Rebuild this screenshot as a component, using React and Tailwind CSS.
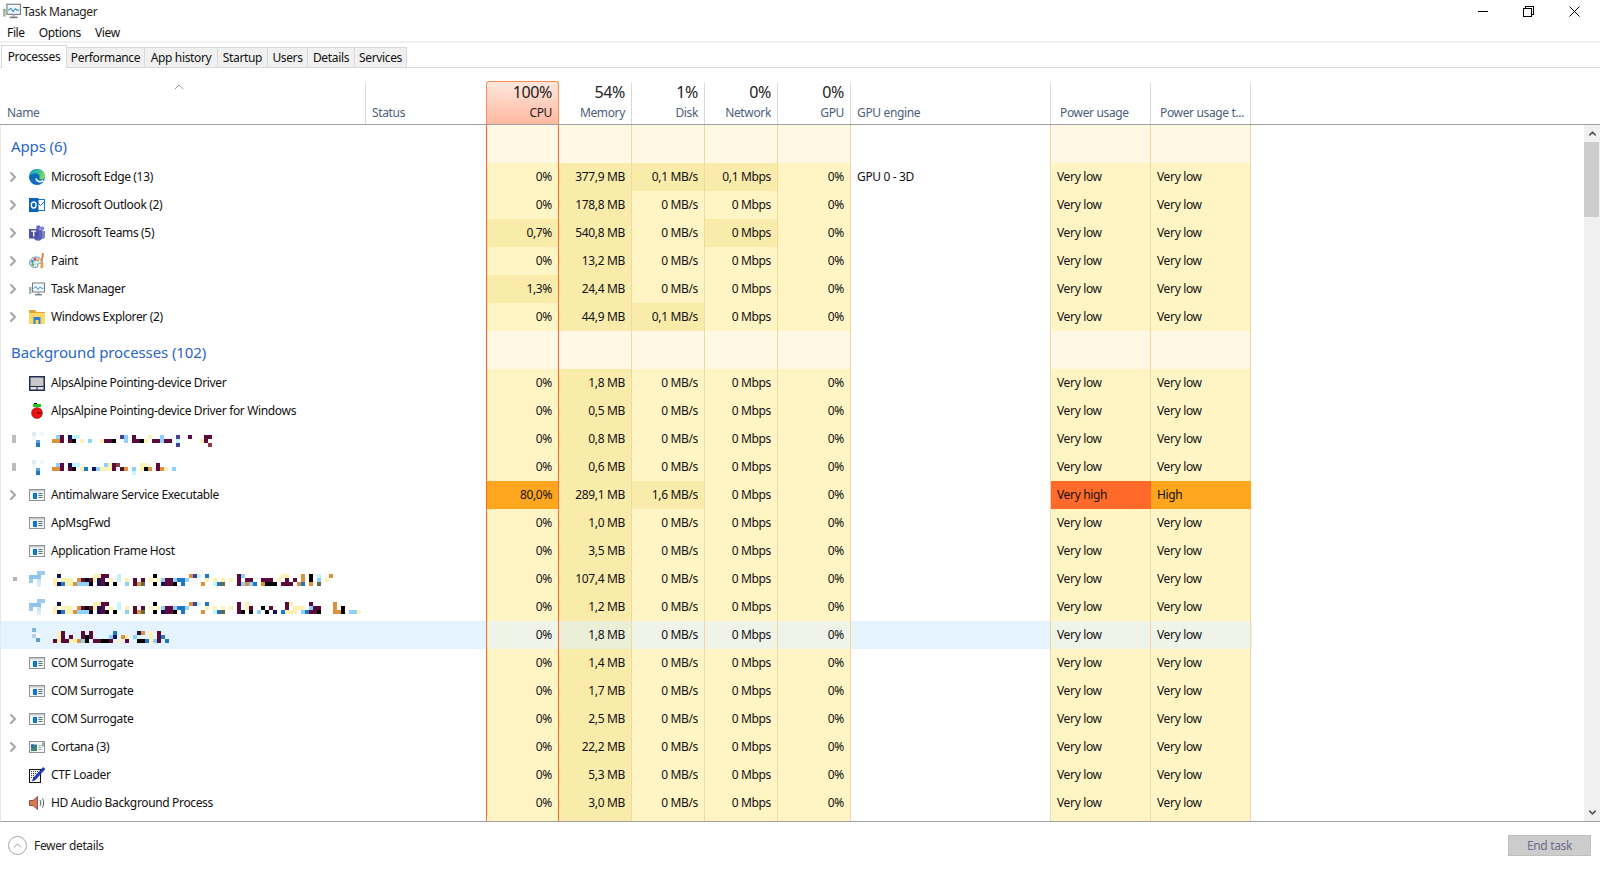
import { ChevronRight, ChevronUp, ChevronDown } from 'lucide-react'

const palette = {
  b: '#8fd0ff', B: '#1f78c4', p: '#5c0a3c', n: '#14145c', c: '#c4f4ff', i: '#44409a', y: '#fbf2b4',
  o: '#dc9238', k: '#000000', r: '#8a3c40', g: '#6a6a40',
}

// pixelated (redacted) names: each row is a list of "<cell index><colour>" in 4px cells
function Mosaic({ rows, x = 0, y = 0 }) {
  const parsed = rows.map((r) => r.split(' ').filter(Boolean).map((c) => [parseInt(c, 10), c.slice(-1)]))
  const width = (Math.max(...parsed.flat().map((c) => c[0])) + 1) * 4
  return (
    <svg width={width} height={rows.length * 4} shapeRendering="crispEdges" className="shrink-0" style={{ marginLeft: x, marginTop: y }}>
      {parsed.map((row, j) =>
        row.map(([i, ch]) => <rect key={`${i}-${j}`} x={i * 4} y={j * 4} width="4" height="4" fill={palette[ch]} />)
      )}
    </svg>
  )
}

const c1 = '1n 10y 11y 12p 13p 16c 25k 34o 35i 36c 38B '
const c2 = '0y 2y 3y 4y 6o 7p 8k 9p 10y 11n 12p 14y 16c 18y 20p 22p 24y 26y 27b 28p 29p 30b 31B 32B 33b 38y 40y 42y 44y '
const c3 = '0y 1n 2B 3y 4y 5o 6b 7b 8b 9k 11n 12p 13k 15k 18b 20p 21o 22g 25k 27n 28p 29p 30k 32B 37o 40c 41B 42g '

const blurA = [
  '1b 2p 4n 5c 6c 17i 18b 20p 24y 27b 31i 34p 38p 39p',
  '0o 1o 2p 4p 5k 7y 9b 12y 13p 14p 15k 18b 20p 21p 22k 23y 25p 26p 27b 28p 29p 31c 37y 38p',
  '31i 39r',
]
const blurB = [
  '1b 2p 4n 5c 6c 13b 14y 15p 16r 22y 23y 26p',
  '0o 1o 2p 4p 5k 7y 8B 10n 11b 12y 13y 14y 15p 17p 18o 20b 22y 23k 24o 26p 27o 28y 30b',
  '20c',
]
const blurC = [
  c1 + '46p 47b 57y 58y 62o 64k 66c 69o',
  c2 + '46p 48p 49p 52p 53p 54p 56y 58p 60p 62o 64k 66b 68y',
  c3 + '46p 47b 48o 49b 50B 52o 53k 54k 55k 57p 58p 59p 61o 62B 64o 66g',
]
const blurD = [
  c1 + '46p 48y 58p 59y 64p 70o',
  c2 + '46p 48y 49p 52k 54p 58p 60y 61y 62y 64b 65p 66p 70o 72k',
  c3 + '46p 47k 49k 51b 53k 55n 57B 58y 59y 60y 62b 63B 64p 65p 66k 70o 71o 72k 74b 75b 76y',
]
const blurE = [
  '1y 2p 7p 9p 15B 21n 22o 24y 26p',
  '1y 2p 4p 7p 8k 9p 14b 15n 17o 18y 20b 24y 26p 27B',
  '0p 1y 2p 3p 4y 5y 6o 7b 8k 10p 11p 12k 13k 14p 16y 18p 21k 22k 23B 24y 25b 26p 28B',
]

const Box = ({ children }) => (
  <svg width="16" height="16" viewBox="0 0 16 16" className="shrink-0">{children}</svg>
)

const EdgeIcon = () => (
  <Box>
    <defs>
      <linearGradient id="edgeTop" x1="0" y1="0" x2="1" y2="0.3">
        <stop offset="0" stopColor="#1a9ed0" />
        <stop offset="0.6" stopColor="#35c1a0" />
        <stop offset="1" stopColor="#7cdc5c" />
      </linearGradient>
    </defs>
    <circle cx="8" cy="8" r="8" fill="#0d6cbe" />
    <path d="M.4 6.500C1.500 2.500 4.500 0 8.500 0 13 0 16 3.500 16 7.500c0 2-1.500 3-3 3-2 0-3-1-2.500-2 .6-1.500-.5-4-3-4-3 0-5 .4-7.100 2z" fill="url(#edgeTop)" />
    <path d="M7 9.500c.5 3 4 4 7.500 2" fill="none" stroke="#eaf5fc" strokeWidth="1.700" />
  </Box>
)
const OutlookIcon = () => (
  <Box>
    <rect x="5" y="2.500" width="10.500" height="11" fill="#ffffff" stroke="#0f78d4" />
    <path d="M8 5l3.500 3.500L15 5" fill="none" stroke="#0f78d4" />
    <rect x="0" y="1" width="9.500" height="14" fill="#0c64b8" />
    <ellipse cx="4.700" cy="8" rx="2.400" ry="3" fill="none" stroke="#fff" strokeWidth="1.400" />
  </Box>
)
const TeamsIcon = () => (
  <Box>
    <circle cx="13.200" cy="3.400" r="2" fill="#7b83cc" />
    <circle cx="9.400" cy="2.600" r="2.300" fill="#6a70c0" />
    <path d="M11 6h5v5.500c0 1.500-1.200 2.500-2.500 2.500H11z" fill="#7b83cc" />
    <path d="M5 5h8v7.500c0 2-1.500 3.300-4 3.300-2.200 0-4-1.300-4-3.300z" fill="#5a60b8" />
    <rect x="0" y="4" width="9.500" height="9.500" fill="#4b53a8" />
    <path d="M2.200 6.200h5M4.700 6.200V11.500" stroke="#fff" strokeWidth="1.300" />
  </Box>
)
const PaintIcon = () => (
  <Box>
    <path d="M.6 10c0-3.600 3-6 6.400-6 3.400 0 5.600 2 5.600 4.600 0 2-1.800 2.200-3 2.200-1 0-1.200 1-.8 1.800.4 1-.4 2-2 2C3.400 14.600.6 13 .6 10z" fill="#d4e6f0" stroke="#5f8aa8" strokeWidth=".9" />
    <circle cx="3.400" cy="8.500" r="1.400" fill="#2a94d4" />
    <circle cx="6" cy="6.400" r="1.400" fill="#dc4040" />
    <circle cx="3.800" cy="11.600" r="1.400" fill="#58ac3c" />
    <circle cx="9" cy="7" r="1.200" fill="#e8a820" />
    <path d="M13 0l1.800.6-1.200 8-1.500-.2z" fill="#d87828" />
    <path d="M11.800 8.500l2.200.3.200 5.400-1.700 1.600-1.100-1.400z" fill="#ee9a44" />
  </Box>
)
const TaskIcon = ({ small }) => (
  <svg width={small ? 20 : 16} height={small ? 18 : 16} viewBox="0 0 16 16" className="shrink-0">
    <rect x="0" y="6" width="2.500" height="7" fill="#b0b8b0" />
    <rect x=".6" y="6.500" width="1.200" height="2" fill="#6cc060" />
    <rect x="3.500" y="2" width="12" height="9" fill="#f2f8fc" stroke="#737d85" />
    <path d="M4.500 7.500l2.500-2 2 3 2-2.500 2 1.500 1.500-.5" fill="none" stroke="#2a88cc" strokeWidth=".9" />
    <rect x="8.500" y="11" width="2" height="2" fill="#a8b0b4" />
    <rect x="6" y="13" width="7" height="1.400" fill="#737d85" />
  </svg>
)
const FolderIcon = () => (
  <Box>
    <path d="M0 1h6l1.500 2H16v4H0z" fill="#e0a838" />
    <rect x="0" y="4" width="16" height="11" fill="#ffd767" />
    <rect x="4.500" y="8" width="7" height="7" fill="#2a84cc" />
    <rect x="6.500" y="11" width="3" height="4" fill="#ffd767" />
  </Box>
)
const AlpsIcon = () => (
  <Box>
    <rect x="0" y="1" width="16" height="15" fill="#232c50" />
    <rect x="1.500" y="2.500" width="13" height="8.500" fill="#c8c8c8" />
    <rect x="1.500" y="12" width="6" height="2.500" fill="#e4e4e4" />
    <rect x="8.500" y="12" width="6" height="2.500" fill="#e4e4e4" />
  </Box>
)
const AppleIcon = () => (
  <Box>
    <rect x="5" y="0" width="3" height="1" fill="#000" />
    <rect x="4" y="1" width="8" height="3" fill="#1ec81e" />
    <circle cx="8" cy="10" r="5.500" fill="#f01010" stroke="#300" strokeWidth=".4" />
    <path d="M8 10h4" stroke="#200" strokeWidth="1" />
  </Box>
)
const WindowIcon = () => (
  <Box>
    <rect x=".5" y="2.500" width="15" height="11" fill="#f4f6f8" stroke="#8f9498" />
    <rect x="1" y="3" width="14" height="1.500" fill="#c8ccd0" />
    <rect x="4" y="6" width="4" height="6" fill="#0a78d8" />
    <path d="M9.500 6.500h4M9.500 8.500h4M9.500 10.500h4" stroke="#5a6a7a" />
  </Box>
)
const CortanaIcon = () => (
  <Box>
    <rect x=".5" y="2.500" width="15" height="11" fill="#f4f6f8" stroke="#8f9498" />
    <rect x="2" y="5.500" width="6" height="6.500" fill="#3a8a70" />
    <rect x="2" y="5.500" width="3" height="3" fill="#2a6ab0" />
    <path d="M9.500 6.500h3M9.500 8.500h3M9.500 10.500h3" stroke="#a0a8b0" />
    <path d="M14 3.500v4" stroke="#3a6a40" />
  </Box>
)
const LoaderIcon = () => (
  <Box>
    <rect x=".5" y="2.500" width="11" height="13" fill="#fff" stroke="#111" />
    <path d="M2 4.500h8M2 6.500h6M2 8.500h4M2 10.500h3" stroke="#333" strokeDasharray="1 1" />
    <path d="M14 .5L16 2 6.500 12.500 3.500 14l1-3z" fill="#1a3ad0" stroke="#0a1a70" strokeWidth=".6" />
  </Box>
)
const SpeakerIcon = () => (
  <Box>
    <path d="M.5 5.500h3.500L8.500 1.500v13L4 10.500H.5z" fill="#d87858" stroke="#7a3a28" strokeWidth=".8" />
    <path d="M11 5c1 2 1 4 0 6M13.500 3.500c1.500 3 1.500 6 0 9" fill="none" stroke="#444" strokeWidth=".9" />
  </Box>
)
const PinwheelIcon = () => (
  <svg width="16" height="16" shapeRendering="crispEdges" className="shrink-0">
    <rect x="8" y="0" width="8" height="4" fill="#9ccbf0" />
    <rect x="0" y="4" width="12" height="4" fill="#8fc4ee" />
    <rect x="0" y="8" width="4" height="4" fill="#9ccbf0" />
    <rect x="8" y="8" width="4" height="4" fill="#cfe4f6" />
    <rect x="8" y="12" width="4" height="4" fill="#dcebf8" />
  </svg>
)
const DotsIcon = () => (
  <svg width="16" height="16" shapeRendering="crispEdges" className="shrink-0">
    <rect x="3" y="1" width="4" height="4" fill="#dceaf6" />
    <rect x="11" y="1" width="4" height="4" fill="#eef5fb" />
    <rect x="3" y="5" width="4" height="4" fill="#eef5fb" />
    <rect x="7" y="9" width="4" height="4" fill="#5b9fd8" />
    <rect x="7" y="12" width="4" height="4" fill="#1f78c4" />
  </svg>
)
const SmallDots = () => (
  <svg width="16" height="16" shapeRendering="crispEdges" className="shrink-0">
    <rect x="3" y="1" width="4" height="4" fill="#7fb4de" />
    <rect x="7" y="3" width="4" height="4" fill="#eaf2fa" />
    <rect x="3" y="7" width="4" height="4" fill="#b0cfe8" />
    <rect x="7" y="7" width="4" height="4" fill="#ffffff" />
    <rect x="7" y="11" width="4" height="4" fill="#5b9fd8" />
  </svg>
)

const Y = 'Very low'
const app = (name, Icon, cpu, mem, disk = '0 MB/s', net = '0 Mbps', extra = {}) => ({ name, Icon, cpu, mem, disk, net, expand: true, ...extra })
const bg = (name, Icon, mem, expand = false, extra = {}) => ({ name, Icon, cpu: '0%', mem, disk: '0 MB/s', net: '0 Mbps', expand, ...extra })

const apps = [
  app('Microsoft Edge (13)', EdgeIcon, '0%', '377,9 MB', '0,1 MB/s', '0,1 Mbps', { engine: 'GPU 0 - 3D' }),
  app('Microsoft Outlook (2)', OutlookIcon, '0%', '178,8 MB'),
  app('Microsoft Teams (5)', TeamsIcon, '0,7%', '540,8 MB'),
  app('Paint', PaintIcon, '0%', '13,2 MB'),
  app('Task Manager', TaskIcon, '1,3%', '24,4 MB'),
  app('Windows Explorer (2)', FolderIcon, '0%', '44,9 MB', '0,1 MB/s'),
]

const background = [
  bg('AlpsAlpine Pointing-device Driver', AlpsIcon, '1,8 MB'),
  bg('AlpsAlpine Pointing-device Driver for Windows', AppleIcon, '0,5 MB'),
  bg('', DotsIcon, '0,8 MB', false, { blur: blurA, stub: 'big', blurX: 7, blurY: 3 }),
  bg('', DotsIcon, '0,6 MB', false, { blur: blurB, stub: 'big', blurX: 7, blurY: 3 }),
  bg('Antimalware Service Executable', WindowIcon, '289,1 MB', true, { cpu: '80,0%', disk: '1,6 MB/s', p1: 'Very high', p2: 'High' }),
  bg('ApMsgFwd', WindowIcon, '1,0 MB'),
  bg('Application Frame Host', WindowIcon, '3,5 MB'),
  bg('', PinwheelIcon, '107,4 MB', false, { blur: blurC, stub: 'small', blurX: 8, blurY: 2 }),
  bg('', PinwheelIcon, '1,2 MB', false, { blur: blurD, blurX: 8, blurY: 2 }),
  bg('', SmallDots, '1,8 MB', false, { blur: blurE, selected: true, blurX: 8, blurY: 4 }),
  bg('COM Surrogate', WindowIcon, '1,4 MB'),
  bg('COM Surrogate', WindowIcon, '1,7 MB'),
  bg('COM Surrogate', WindowIcon, '2,5 MB', true),
  bg('Cortana (3)', CortanaIcon, '22,2 MB', true),
  bg('CTF Loader', LoaderIcon, '5,3 MB'),
  bg('HD Audio Background Process', SpeakerIcon, '3,0 MB'),
]

const cellBase = 'h-full flex items-center justify-end pr-1.5 shrink-0'

function Fill({ value, tone, selected, cpu }) {
  // tone: base, dark, hot (80%), selected row tints
  let color = selected ? 'bg-[#f0f3e8]' : 'bg-[#fff4c4]'
  if (tone === 'dark') color = selected ? 'bg-[#ecefd8]' : 'bg-[#f9ecab]'
  if (tone === 'hot') color = 'bg-[#ffa61e]'
  return (
    <div className={`${cellBase} w-[73px] ${color} ${cpu ? 'border-x border-[#ff6a2b]' : 'border-r border-[#efd9a0]'}`}>
      {value}
    </div>
  )
}

function GroupRow({ title }) {
  return (
    <div className="flex h-[38px] w-[1251px] shrink-0">
      <div className="w-[485px] shrink-0 pl-[10px] pt-[9px] text-[15px] leading-[24px] tracking-[-0.1px] text-[#2a66c8]">{title}</div>
      <div className="w-[73px] shrink-0 bg-[#fff8e4] border-x border-[#ff6a2b]" />
      <div className="w-[73px] shrink-0 bg-[#fff8e4] border-r border-[#efd9a0]" />
      <div className="w-[73px] shrink-0 bg-[#fff8e4] border-r border-[#efd9a0]" />
      <div className="w-[73px] shrink-0 bg-[#fff8e4] border-r border-[#efd9a0]" />
      <div className="w-[73px] shrink-0 bg-[#fff8e4] border-r border-[#efd9a0]" />
      <div className="w-[200px] shrink-0 border-r border-[#efd9a0]" />
      <div className="w-[100px] shrink-0 bg-[#fff8e4] border-r border-[#efd9a0]" />
      <div className="w-[100px] shrink-0 bg-[#fff8e4] border-r border-[#efd9a0]" />
    </div>
  )
}

function ProcessRow({ row = {} }) {
  const { name, Icon, cpu, mem, disk, net, engine, expand, blur, blurX, blurY, stub, selected, p1, p2 } = row
  const cpuTone = cpu === '80,0%' ? 'hot' : cpu === '0,7%' || cpu === '1,3%' ? 'dark' : 'base'
  return (
    <div className={`flex h-[28px] w-[1251px] shrink-0 items-center ${selected ? 'bg-[#e5f3ff]' : ''}`}>
      <div className="flex h-full w-[485px] shrink-0 items-center">
        <div className="flex w-[28px] shrink-0 justify-center pr-[5px]">
          {expand && <ChevronRight size={16} strokeWidth={3} className="text-[#a6a6a6]" />}
          {stub === 'big' && <span className="ml-[3px] h-[8px] w-[4px] bg-[#bdbdbd]" />}
          {stub === 'small' && <span className="ml-[5px] h-[4px] w-[4px] bg-[#b5b5b5]" />}
        </div>
        {Icon && <Icon />}
        {blur ? <Mosaic rows={blur} x={blurX} y={blurY} /> : <span className="ml-[6px] whitespace-nowrap">{name}</span>}
      </div>
      <Fill value={cpu} tone={cpuTone} selected={selected} cpu />
      <Fill value={mem} tone="dark" selected={selected} />
      <Fill value={disk} tone={disk && disk !== '0 MB/s' ? 'dark' : 'base'} selected={selected} />
      <Fill value={net} tone={net === '0,1 Mbps' || name === 'Microsoft Teams (5)' ? 'dark' : 'base'} selected={selected} />
      <Fill value={cpu ? '0%' : ''} selected={selected} />
      <div className="flex h-full w-[200px] shrink-0 items-center border-r border-[#efd9a0] pl-[6px]">{engine}</div>
      <div className={`flex h-full w-[100px] shrink-0 items-center pl-[6px] ${p1 ? 'bg-[#ff6a2b]' : `border-r border-[#efd9a0] ${selected ? 'bg-[#f0f3e8]' : 'bg-[#fff4c4]'}`}`}>
        {cpu ? p1 || Y : ''}
      </div>
      <div className={`flex h-full w-[100px] shrink-0 items-center pl-[6px] ${p2 ? 'bg-[#ffa61e]' : `border-r border-[#efd9a0] ${selected ? 'bg-[#f0f3e8]' : 'bg-[#fff4c4]'}`}`}>
        {cpu ? p2 || Y : ''}
      </div>
    </div>
  )
}

function MetricHead({ pct, label, active }) {
  if (active) {
    return (
      <div className="flex h-[43px] w-[73px] shrink-0 flex-col items-end rounded-t-[3px] border-x border-t border-[#ff8a5a] bg-gradient-to-b from-[#fde6dc] to-[#ffb8a0] pr-1.5">
        <div className="mt-[1px] text-[16px] leading-[19px] text-[#222]">{pct}</div>
        <div className="mt-[2px] leading-[18px] text-[#222]">{label}</div>
      </div>
    )
  }
  return (
    <div className="flex h-[41px] w-[73px] shrink-0 flex-col items-end border-r border-[#d9d9d9] pr-1.5">
      <div className="text-[16px] leading-[19px] text-[#222]">{pct}</div>
      <div className="mt-[2px] leading-[18px] text-[#4c607a]">{label}</div>
    </div>
  )
}

function TextHead({ label, w, pl }) {
  return (
    <div className={`flex h-[41px] shrink-0 items-end border-r border-[#d9d9d9] pb-[2px] leading-[18px] text-[#4c607a] ${w} ${pl}`}>
      {label}
    </div>
  )
}

const tabs = [
  ['Performance', 'w-[78px]'],
  ['App history', 'w-[73px]'],
  ['Startup', 'w-[50px]'],
  ['Users', 'w-[40px]'],
  ['Details', 'w-[47px]'],
  ['Services', 'w-[52px]'],
]

export default function App() {
  return (
    <div className="flex h-screen w-full flex-col overflow-hidden bg-white text-[12px] text-[#111] font-['Noto_Sans',sans-serif] tracking-[-0.35px]">
      {/* Title bar */}
      <div className="flex h-[22px] shrink-0 items-center">
        <div className="ml-[2px] mr-[1px]"><TaskIcon small /></div>
        <span className="pt-[2px] text-[#222]">Task Manager</span>
        <div className="ml-auto flex items-center">
          <div className="mr-[35px] h-[1px] w-[10px] bg-black" />
          <svg width="11" height="11" viewBox="0 0 11 11" className="mr-[35px]" shapeRendering="crispEdges">
            <path d="M.5 2.500h7.500v8H.5zM2.500 2.500V.5h8v8H8" fill="none" stroke="#000" />
          </svg>
          <svg width="11" height="11" viewBox="0 0 11 11" className="mr-[20px]">
            <path d="M.5.5l10 10M10.500.5l-10 10" fill="none" stroke="#000" />
          </svg>
        </div>
      </div>

      {/* Menu */}
      <div className="flex h-[19px] shrink-0 items-center gap-[14px] pl-[7px] pt-[2px]">
        <span>File</span>
        <span>Options</span>
        <span>View</span>
      </div>
      <div className="h-[2px] shrink-0 bg-[#f0f0f0]" />

      {/* Tabs */}
      <div className="flex h-[25px] shrink-0 items-end border-b border-[#d9d9d9] pl-[1px]">
        <div className="-mb-[1px] flex h-[23px] w-[66px] items-center justify-center border-x border-t border-[#d9d9d9] bg-white pb-[1px]">Processes</div>
        {tabs.map(([label, w]) => (
          <div key={label} className={`flex h-[20px] items-center justify-center border-r border-t border-[#d9d9d9] bg-[#f0f0f0] ${w}`}>
            {label}
          </div>
        ))}
      </div>

      {/* Column headers */}
      <div className="flex h-[57px] shrink-0 items-end border-b border-[#a0a0a0]">
        <div className="relative">
          <ChevronUp size={16} strokeWidth={1.5} className="absolute left-[171px] top-[-4px] text-[#9a9a9a]" />
          <TextHead label="Name" w="w-[366px]" pl="pl-[7px]" />
        </div>
        <TextHead label="Status" w="w-[120px]" pl="pl-[6px] !border-r-0" />
        <MetricHead pct="100%" label="CPU" active />
        <MetricHead pct="54%" label="Memory" />
        <MetricHead pct="1%" label="Disk" />
        <MetricHead pct="0%" label="Network" />
        <MetricHead pct="0%" label="GPU" />
        <TextHead label="GPU engine" w="w-[200px]" pl="pl-[6px]" />
        <TextHead label="Power usage" w="w-[100px]" pl="pl-[9px]" />
        <TextHead label="Power usage t..." w="w-[100px]" pl="pl-[9px]" />
      </div>

      {/* Process list */}
      <div className="flex h-[697px] shrink-0 border-b border-l border-b-[#a0a0a0] border-l-[#e8e8e8]">
        <div className="flex flex-1 flex-col overflow-hidden">
          <GroupRow title="Apps (6)" />
          {apps.map((row) => <ProcessRow key={row.name} row={row} />)}
          <GroupRow title="Background processes (102)" />
          {background.map((row, i) => <ProcessRow key={i} row={row} />)}
          <ProcessRow />
        </div>
        <div className="flex w-[16px] shrink-0 flex-col bg-[#f0f0f0]">
          <div className="flex h-[17px] items-center justify-center"><ChevronUp size={11} strokeWidth={3.5} className="text-[#5a5a5a]" /></div>
          <div className="h-[75px] w-[15px] bg-[#cdcdcd]" />
          <div className="mt-auto flex h-[17px] items-center justify-center"><ChevronDown size={11} strokeWidth={3.5} className="text-[#5a5a5a]" /></div>
        </div>
      </div>

      {/* Footer */}
      <div className="flex flex-1 items-start pl-[8px] pt-[13px]">
        <div className="mt-[1px] flex h-[19px] w-[19px] items-center justify-center rounded-full border border-[#a8a8a8]">
          <ChevronUp size={13} strokeWidth={1.6} className="text-[#8a8a8a]" />
        </div>
        <span className="ml-[7px] mt-[1px] leading-[19px] text-[#222]">Fewer details</span>
        <button className="ml-auto mr-[9px] h-[21px] w-[83px] border border-[#bfbfbf] bg-[#cccccc] text-[#6d6d8c]" type="button">End task</button>
      </div>
    </div>
  )
}
